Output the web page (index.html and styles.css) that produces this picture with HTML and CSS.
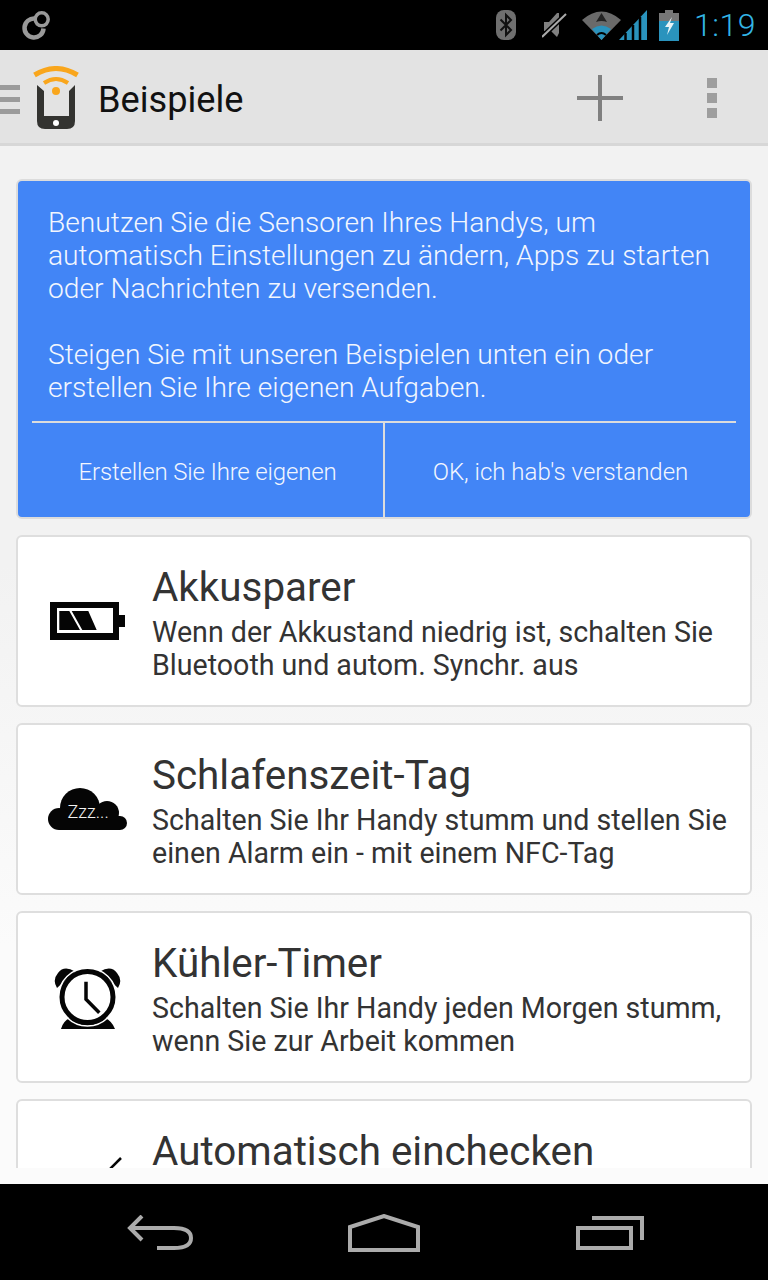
FILE: index.html
```html
<!DOCTYPE html>
<html lang="de">
<head>
<meta charset="utf-8">
<title>Beispiele</title>
<link rel="stylesheet" href="styles.css">
</head>
<body>
<div class="phone">
  <header class="status">
    <svg width="32" height="32" viewBox="0 0 32 32"><path d="M14 9.500A9.500 9.500 0 1 0 22.500 19.500" fill="none" stroke="#9a9a9a" stroke-width="4.500"/><circle cx="20.700" cy="10.300" r="6.500" fill="none" stroke="#9a9a9a" stroke-width="3.500"/></svg>
    <div class="status-right">
      <svg class="st-bt" width="20" height="30" viewBox="0 0 20 30"><rect width="20" height="30" rx="8" fill="#6f6f6f"/><path d="M4.500 9.500 15 20 10 25V5L15 10 4.500 20.500" fill="none" stroke="#111" stroke-width="2"/></svg>
      <svg class="st-mute" width="25" height="26" viewBox="0 0 25 26"><path d="M2 10H7L15 1 17 1V21L15 25 9 19H2Z" fill="#808080"/><path d="M0 25 24 2" stroke="#000" stroke-width="5"/><path d="M0 25 24 2" stroke="#aaa" stroke-width="2"/></svg>
      <svg class="st-wifi" width="65" height="30" viewBox="0 0 65 30"><path d="M0 10Q19.500 -7 39 10L19.500 30Z" fill="#6a6a6a"/><path d="M10 19Q19.500 12 29 19L19.500 30Z" fill="#2a93bd"/><path d="M15 25Q19.500 21 24 25" stroke="#000" stroke-width="2" fill="none"/><path d="M14 12 19.500 3 25 12Q19.500 10 14 12Z" fill="#222"/><path d="M37 30 65 0V30Z" fill="#2a93bd"/><path d="M43.500 30V23M51 30V15M58 30V7" stroke="#000" stroke-width="2.500"/></svg>
      <svg class="st-bat" width="20" height="31" viewBox="0 0 20 31"><path d="M6 0H14V3H20V31H0V3H6Z" fill="#777"/><path d="M0 11H20V31H0Z" fill="#2a93bd"/><path d="M13 7 6 17H10L8 25 15 13H11Z" fill="#e8f4f8"/></svg>
      <span class="clock">1:19</span>
    </div>
  </header>

  <div class="actionbar">
    <div class="drawer"><i></i><i></i><i></i></div>
    <svg class="logo" width="46" height="64" viewBox="0 0 46 64">
      <path d="M4 19 11 25V50H36V25L42 19V55Q42 63 34 63H12Q4 63 4 55Z" fill="#333330"/>
      <circle cx="23" cy="57" r="3" fill="#fff"/>
      <path d="M1.500 9Q23 -4 44.500 9" fill="none" stroke="#f9a61c" stroke-width="5"/>
      <path d="M11 17Q23 9 35 17" fill="none" stroke="#f9a61c" stroke-width="4"/>
      <circle cx="23" cy="25" r="4" fill="#f9a61c"/>
    </svg>
    <h1 class="ab-title">Beispiele</h1>
    <div class="ab-actions">
      <svg class="ab-plus" width="46" height="46" viewBox="0 0 46 46"><path d="M0 23H46M23 0V46" stroke="#808080" stroke-width="4"/></svg>
      <div class="ab-more"><i></i><i></i><i></i></div>
    </div>
  </div>

  <main class="content">
    <section class="banner">
      <div class="banner-text">
        <p>Benutzen Sie die Sensoren Ihres Handys, um automatisch Einstellungen zu ändern, Apps zu starten oder Nachrichten zu versenden.</p>
        <p>Steigen Sie mit unseren Beispielen unten ein oder erstellen Sie Ihre eigenen Aufgaben.</p>
      </div>
      <div class="banner-actions">
        <div class="banner-btn banner-btn-own">Erstellen Sie Ihre eigenen</div>
        <div class="banner-btn">OK, ich hab's verstanden</div>
      </div>
    </section>

    <article class="card">
      <div class="card-icon">
        <svg width="75" height="38" viewBox="0 0 75 38"><path fill-rule="evenodd" d="M0 0H69V38H0ZM7 6V31H63V6Z" fill="#050505"/><path d="M69 13H75V25H69Z" fill="#050505"/><path d="M9.300 9H19.300L30 28H9.300ZM21.700 9H38.300L46.700 28H32.300Z" fill="#050505"/></svg>
      </div>
      <div class="card-body">
        <h2>Akkusparer</h2>
        <p>Wenn der Akkustand niedrig ist, schalten Sie Bluetooth und autom. Synchr. aus</p>
      </div>
    </article>

    <article class="card">
      <div class="card-icon">
        <div class="cloud">
          <svg width="79" height="42" viewBox="0 0 79 42"><g fill="#050505"><circle cx="32" cy="20" r="20"/><circle cx="59" cy="25" r="12"/><circle cx="11" cy="31" r="11"/><circle cx="72" cy="35" r="7"/><rect x="11" y="28" width="61" height="14"/></g></svg>
          <span class="zzz">Zzz...</span>
        </div>
      </div>
      <div class="card-body">
        <h2>Schlafenszeit-Tag</h2>
        <p>Schalten Sie Ihr Handy stumm und stellen Sie einen Alarm ein - mit einem NFC-Tag</p>
      </div>
    </article>

    <article class="card">
      <div class="card-icon">
        <svg class="alarm" width="68" height="63" viewBox="0 0 68 63"><path d="M3 22Q-2 14 4 7 10 -1 21 5.500ZM64 22Q69 14 63 7 57 -1 46 5.500Z" fill="#050505"/><path d="M7 63Q9 55 16 52L24 56H43L51 52Q58 55 61 63Z" fill="#050505"/><circle cx="33.500" cy="31" r="26" fill="#fff"/><circle cx="33.500" cy="31" r="29" fill="none" stroke="#fff" stroke-width="1.500"/><circle cx="33.500" cy="31" r="25.500" fill="none" stroke="#050505" stroke-width="5"/><path d="M32 15.700V33.300L45.300 46.700" fill="none" stroke="#050505" stroke-width="3.500"/></svg>
      </div>
      <div class="card-body">
        <h2>Kühler-Timer</h2>
        <p>Schalten Sie Ihr Handy jeden Morgen stumm, wenn Sie zur Arbeit kommen</p>
      </div>
    </article>

    <article class="card">
      <div class="card-icon">
        <svg width="75" height="60" viewBox="0 0 75 60"><path d="M58 16 71 3" stroke="#050505" stroke-width="2.500"/></svg>
      </div>
      <div class="card-body">
        <h2>Automatisch einchecken</h2>
      </div>
    </article>
  </main>

  <nav class="navbar">
    <svg width="68" height="36" viewBox="0 0 68 36"><path d="M15 1 3 13 15 25M3 13H47Q64 13 64 23 64 33 47 33H30" fill="none" stroke="#ababab" stroke-width="4"/></svg>
    <svg class="nav-home" width="72" height="38" viewBox="0 0 72 38"><path d="M2 36V13L36 2 70 13V36Z" fill="none" stroke="#ababab" stroke-width="4"/></svg>
    <svg width="68" height="36" viewBox="0 0 68 36"><path d="M2 13H55V33H2Z" fill="none" stroke="#ababab" stroke-width="4"/><path d="M16 3H66V25" fill="none" stroke="#ababab" stroke-width="4"/></svg>
  </nav>
</div>
</body>
</html>
```

FILE: styles.css
```css
* { box-sizing: border-box; }
html, body { margin: 0; padding: 0; }
body { background: #000; font-family: Roboto, "Noto Sans", sans-serif; }
.phone { width: 768px; height: 1280px; display: flex; flex-direction: column; overflow: hidden; background: #000; }

.status { flex: 0 0 50px; height: 50px; background: #000; display: flex; align-items: center; justify-content: space-between; padding: 0 12px 0 21px; }
.status-right { display: flex; align-items: center; }
.st-bt { margin-right: 26px; }
.st-mute { margin-right: 15px; }
.st-wifi { margin-right: 12px; }
.st-bat { margin-right: 15px; }
.clock { color: #33b5e5; font-size: 32px; font-weight: 300; letter-spacing: 0.5px; }

.actionbar { flex: 0 0 96px; height: 96px; background: #e3e3e3; border-bottom: 3px solid #d7d7d7; padding-top: 3px; display: flex; align-items: center; }
.drawer { width: 20px; display: flex; flex-direction: column; gap: 7px; margin-right: 13px; margin-top: 3px; }
.drawer i { display: block; height: 5px; background: #9b9b9b; }
.logo { margin-right: 19px; }
.ab-title { margin: 2px 0 0; font-size: 36.200px; font-weight: 400; color: #111; }
.ab-actions { margin-left: auto; display: flex; align-items: center; padding-right: 51px; }
.ab-plus { margin-right: 84px; }
.ab-more { width: 10px; display: flex; flex-direction: column; gap: 5px; }
.ab-more i { display: block; width: 10px; height: 10px; background: #9e9e9e; }

.content { flex: 0 0 1038px; height: 1038px; background: linear-gradient(#f2f2f2, #f2f2f2 420px, #fbfbfb 800px); padding: 33px 16px 0; border-bottom: 16px solid #fbfbfb; overflow: hidden; display: flex; flex-direction: column; gap: 16px; }

.banner { flex: 0 0 340px; background: #4285f6; border: 2px solid #dcdcdc; border-radius: 6px; display: flex; flex-direction: column; padding-top: 25px; color: #f2f6fe; }
.banner-text { padding: 0 30px; font-size: 28.200px; font-weight: 300; line-height: 33px; flex: 0 0 215px; }
.banner-text p { margin: 0 0 33px; }
.banner-text p:last-child { margin-bottom: 0; }
.banner-actions { display: flex; flex: 1; margin: 0 14px; border-top: 2px solid #dcdcdc; }
.banner-btn { flex: 1; display: flex; align-items: center; justify-content: center; font-size: 24px; font-weight: 300; padding-top: 4px; }
.banner-btn-own { letter-spacing: -0.16px; }
.banner-btn + .banner-btn { border-left: 2px solid #dcdcdc; }

.card { flex: 0 0 172px; background: #fff; border: 2px solid #dedede; border-radius: 6px; display: flex; align-items: flex-start; }
.card-icon { flex: 0 0 135px; height: 168px; display: flex; align-items: center; justify-content: center; padding-left: 3px; margin-right: -1px; }
.card-body { flex: 1; color: #333; padding-top: 28px; }
.card-body h2 { margin: 0; font-size: 40.400px; font-weight: 400; line-height: 46px; }
.card-body p { margin: 0; font-size: 28.600px; line-height: 33px; padding-top: 5px; padding-right: 8px; }

.alarm { margin-left: 1px; }
.cloud { position: relative; width: 79px; height: 42px; }
.cloud svg { display: block; }
.zzz { position: absolute; left: 20px; top: 13px; font-size: 18px; font-weight: 300; color: #f2f2f2; }

.navbar { flex: 0 0 96px; background: #000; display: flex; align-items: center; justify-content: space-between; padding: 2px 124px 0 127px; }
.nav-home { margin-left: -3px; }
```
